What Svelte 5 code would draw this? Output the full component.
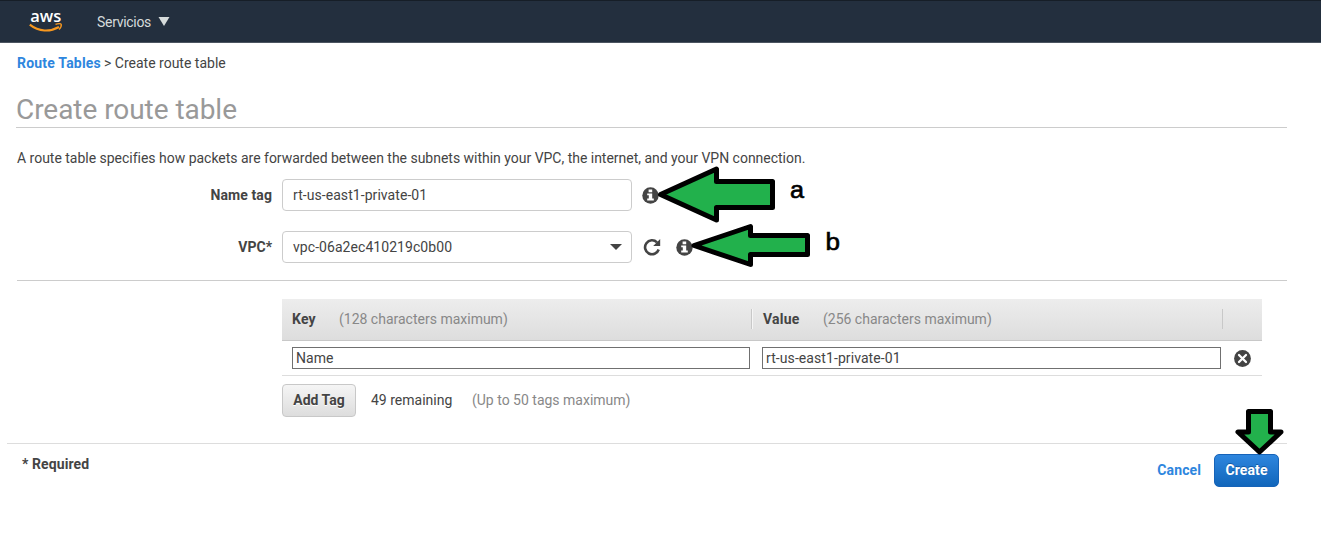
<script>
  let nameTag = $state('rt-us-east1-private-01');
  let tagKey = $state('Name');
  let tagValue = $state('rt-us-east1-private-01');
  const vpc = 'vpc-06a2ec410219c0b00';
</script>

{#snippet info()}
  <svg class="info" width="17" height="17" viewBox="0 0 17 17">
    <circle cx="8.5" cy="8.5" r="8.2" fill="#444" />
    <path d="M6.6 2.6h3.6v2.6H6.6zM5.2 6.4h5v5.2h1.6v1.9H5.2v-1.9h1.6V8.2H5.2z" fill="#fff" />
  </svg>
{/snippet}

<header>
  <svg class="logo" width="34" height="30" viewBox="0 -6 34 30">
    <text x="1.2" y="11.6" textLength="31" lengthAdjust="spacingAndGlyphs">aws</text>
    <path d="M.8 14.6C10 22 21 22 30 17" fill="none" stroke="#f7981f" stroke-width="2.1" />
    <path d="M26.5 14.4C29 13.3 32 13.4 32.2 14.3C32.5 15.5 31.4 18 30 19.4" fill="none" stroke="#f7981f" stroke-width="1.4" />
  </svg>
  <span class="services">Servicios</span>
  <svg class="caret" width="12" height="9" viewBox="0 0 12 9"><path d="M.5 0h11L6 9z" fill="#d5dbdb" /></svg>
</header>

<main>
  <nav><a href="#tables">Route Tables</a><span class="crumb">&gt; Create route table</span></nav>
  <h1>Create route table</h1>
  <p class="description">A route table specifies how packets are forwarded between the subnets within your VPC, the internet, and your VPN connection.</p>

  <section class="fields">
    <div class="field">
      <label for="name">Name tag</label>
      <input id="name" class="box" bind:value={nameTag} />
      {@render info()}
    </div>
    <div class="field">
      <span class="label">VPC*</span>
      <div class="box select"><span>{vpc}</span>
        <svg width="12" height="6" viewBox="0 0 12 6"><path d="M0 0h12L6 6z" fill="#444" /></svg>
      </div>
      <svg class="refresh" width="18" height="18" viewBox="0 0 18 18">
        <path d="M14 4.3A7 7 0 1 0 15.7 11.5" fill="none" stroke="#444" stroke-width="2.6" />
        <path d="M17.2 1v7h-7z" fill="#444" />
      </svg>
      {@render info()}
    </div>
  </section>

  <section class="tags">
    <div class="head">
      <div class="cell"><b class="key">Key</b><span class="hint">(128 characters maximum)</span></div>
      <div class="cell"><b class="value">Value</b><span class="hint">(256 characters maximum)</span></div>
    </div>
    <div class="row">
      <input bind:value={tagKey} aria-label="Key" />
      <input bind:value={tagValue} aria-label="Value" />
      <svg width="17" height="17" viewBox="0 0 17 17">
        <circle cx="8.5" cy="8.5" r="8.4" fill="#444" />
        <path d="M5 5l7 7M12 5l-7 7" stroke="#fff" stroke-width="2.3" stroke-linecap="round" />
      </svg>
    </div>
    <div class="add">
      <button class="add-button">Add Tag</button>
      <span class="remaining">49 remaining</span>
      <span class="hint limit">(Up to 50 tags maximum)</span>
    </div>
  </section>
</main>

<footer>
  <span class="required">* Required</span>
  <a class="cancel" href="#cancel">Cancel</a>
  <button class="create">Create</button>
</footer>

<svg class="marks" width="1321" height="536" viewBox="0 0 1321 536">
  <g fill="#22b14c" stroke="#000" stroke-width="5" stroke-linejoin="round">
    <path d="M660.5 194.5L716.5 169V181.5H772.5V207.5H716.5V220Z" />
    <path d="M694 245.5L750.5 226.5V235.5H807.5V254.5H750.5V264.5Z" />
    <path d="M1248.5 411.5H1270.5V432H1281L1259.5 452L1238 432H1248.5Z" />
  </g>
  <text x="790" y="198" textLength="14" lengthAdjust="spacingAndGlyphs">a</text>
  <text x="825.5" y="250" textLength="14.5" lengthAdjust="spacingAndGlyphs">b</text>
</svg>

<style>
  :global(body) { background: #fff; overflow: hidden; }
  :global(#app) { font: 400 14px/20px Roboto, sans-serif; color: #444; }
  * { box-sizing: border-box; }
  input, button { font: inherit; color: inherit; margin: 0; }
  a { color: #2e86de; font-weight: 700; text-decoration: none; }
  header { height: 43px; display: flex; align-items: center; background: #232f3e; border-top: 1px solid #161e27; border-bottom: 1px solid #4c5561; padding-left: 29px; }
  .logo { margin-top: -5px; }
  .logo text { font: 600 17px "Open Sans", sans-serif; fill: #fff; }
  .services { color: #d5dbdb; margin-left: 34px; width: 55px; letter-spacing: -.3px; white-space: nowrap; }
  .caret { margin-left: 6px; }
  main { padding: 10px 34px 0 17px; }
  nav { display: flex; height: 20px; white-space: nowrap; }
  nav a { width: 87px; letter-spacing: .2px; }
  h1 { font-weight: 400; font-size: 28px; line-height: 38px; letter-spacing: -.05px; color: #999; height: 37px; margin: 18px 0 0 -1px; border-bottom: 1px solid #ccc; }
  .description { margin: 20px 0 0; letter-spacing: -.016px; white-space: nowrap; }
  .fields { padding-top: 11px; height: 113px; border-bottom: 1px solid #ccc; }
  .field { height: 32px; display: flex; align-items: center; margin-bottom: 20px; }
  label, .label { width: 255px; margin-right: 10px; text-align: right; font-weight: 700; }
  label { letter-spacing: .1px; }
  .box { width: 350px; height: 32px; border: 1px solid #ccc; border-radius: 4px; padding: 0 10px; background: #fff; letter-spacing: .06px; }
  .select { display: flex; align-items: center; justify-content: space-between; padding-right: 9px; }
  .info { margin-left: 10px; }
  .refresh { margin-left: 11px; }
  .refresh + .info { margin-left: 15px; }
  .tags { width: 980px; margin: 18px 0 0 265px; }
  .head { display: flex; height: 42px; padding-top: 10px; background: linear-gradient(#ededed, #ddd); border-bottom: 1px solid #c8c8c8; }
  .cell { display: flex; height: 20px; width: 470px; border-right: 1px solid #c8c8c8; padding-left: 10px; box-shadow: 1px 0 #f5f5f5; }
  .cell + .cell { width: 471px; padding-left: 11px; box-shadow: none; }
  .key { width: 47px; }
  .value { width: 60px; }
  b { letter-spacing: .2px; }
  .hint { color: #888; white-space: nowrap; }
  .row { display: flex; align-items: center; height: 35px; padding-left: 10px; border-bottom: 1px solid #ddd; }
  .row input { width: 458px; height: 22px; margin-right: 12px; border: 1px solid #707070; border-radius: 0; padding: 0 3px; background: #fff; letter-spacing: .08px; }
  .row input + input { width: 459px; margin-right: 13px; }
  .add { display: flex; align-items: center; height: 33px; margin-top: 8px; line-height: 18px; padding-bottom: 1px; }
  .add-button { position: relative; top: .5px; width: 74px; height: 33px; border: 1px solid #c8c8c8; border-radius: 4px; background: linear-gradient(#f5f5f5, #ddd); font-weight: 700; padding: 0 0 2px; text-shadow: 0 1px #fff; }
  .remaining { margin-left: 15px; width: 101px; }
  footer { margin: 26px 34px 0 7px; padding: 10px 8px 0 0; border-top: 1px solid #ddd; display: flex; align-items: flex-start; }
  .required { margin-left: 15px; flex: 1; font-weight: 700; letter-spacing: .1px; }
  .cancel { margin: 6px 13px 0 0; letter-spacing: .1px; }
  .create { width: 65px; height: 33px; border: 1px solid #1663b8; border-radius: 5px; background: linear-gradient(#2e86de, #1166bb); color: #fff; font-weight: 700; padding: 0 0 2px; text-shadow: 0 -1px #1159a5; letter-spacing: .1px; }
  .marks { position: absolute; left: 0; top: 0; pointer-events: none; }
  .marks text { font: 23px "Liberation Sans", sans-serif; fill: #000; stroke: #000; stroke-width: .6px; }
</style>
